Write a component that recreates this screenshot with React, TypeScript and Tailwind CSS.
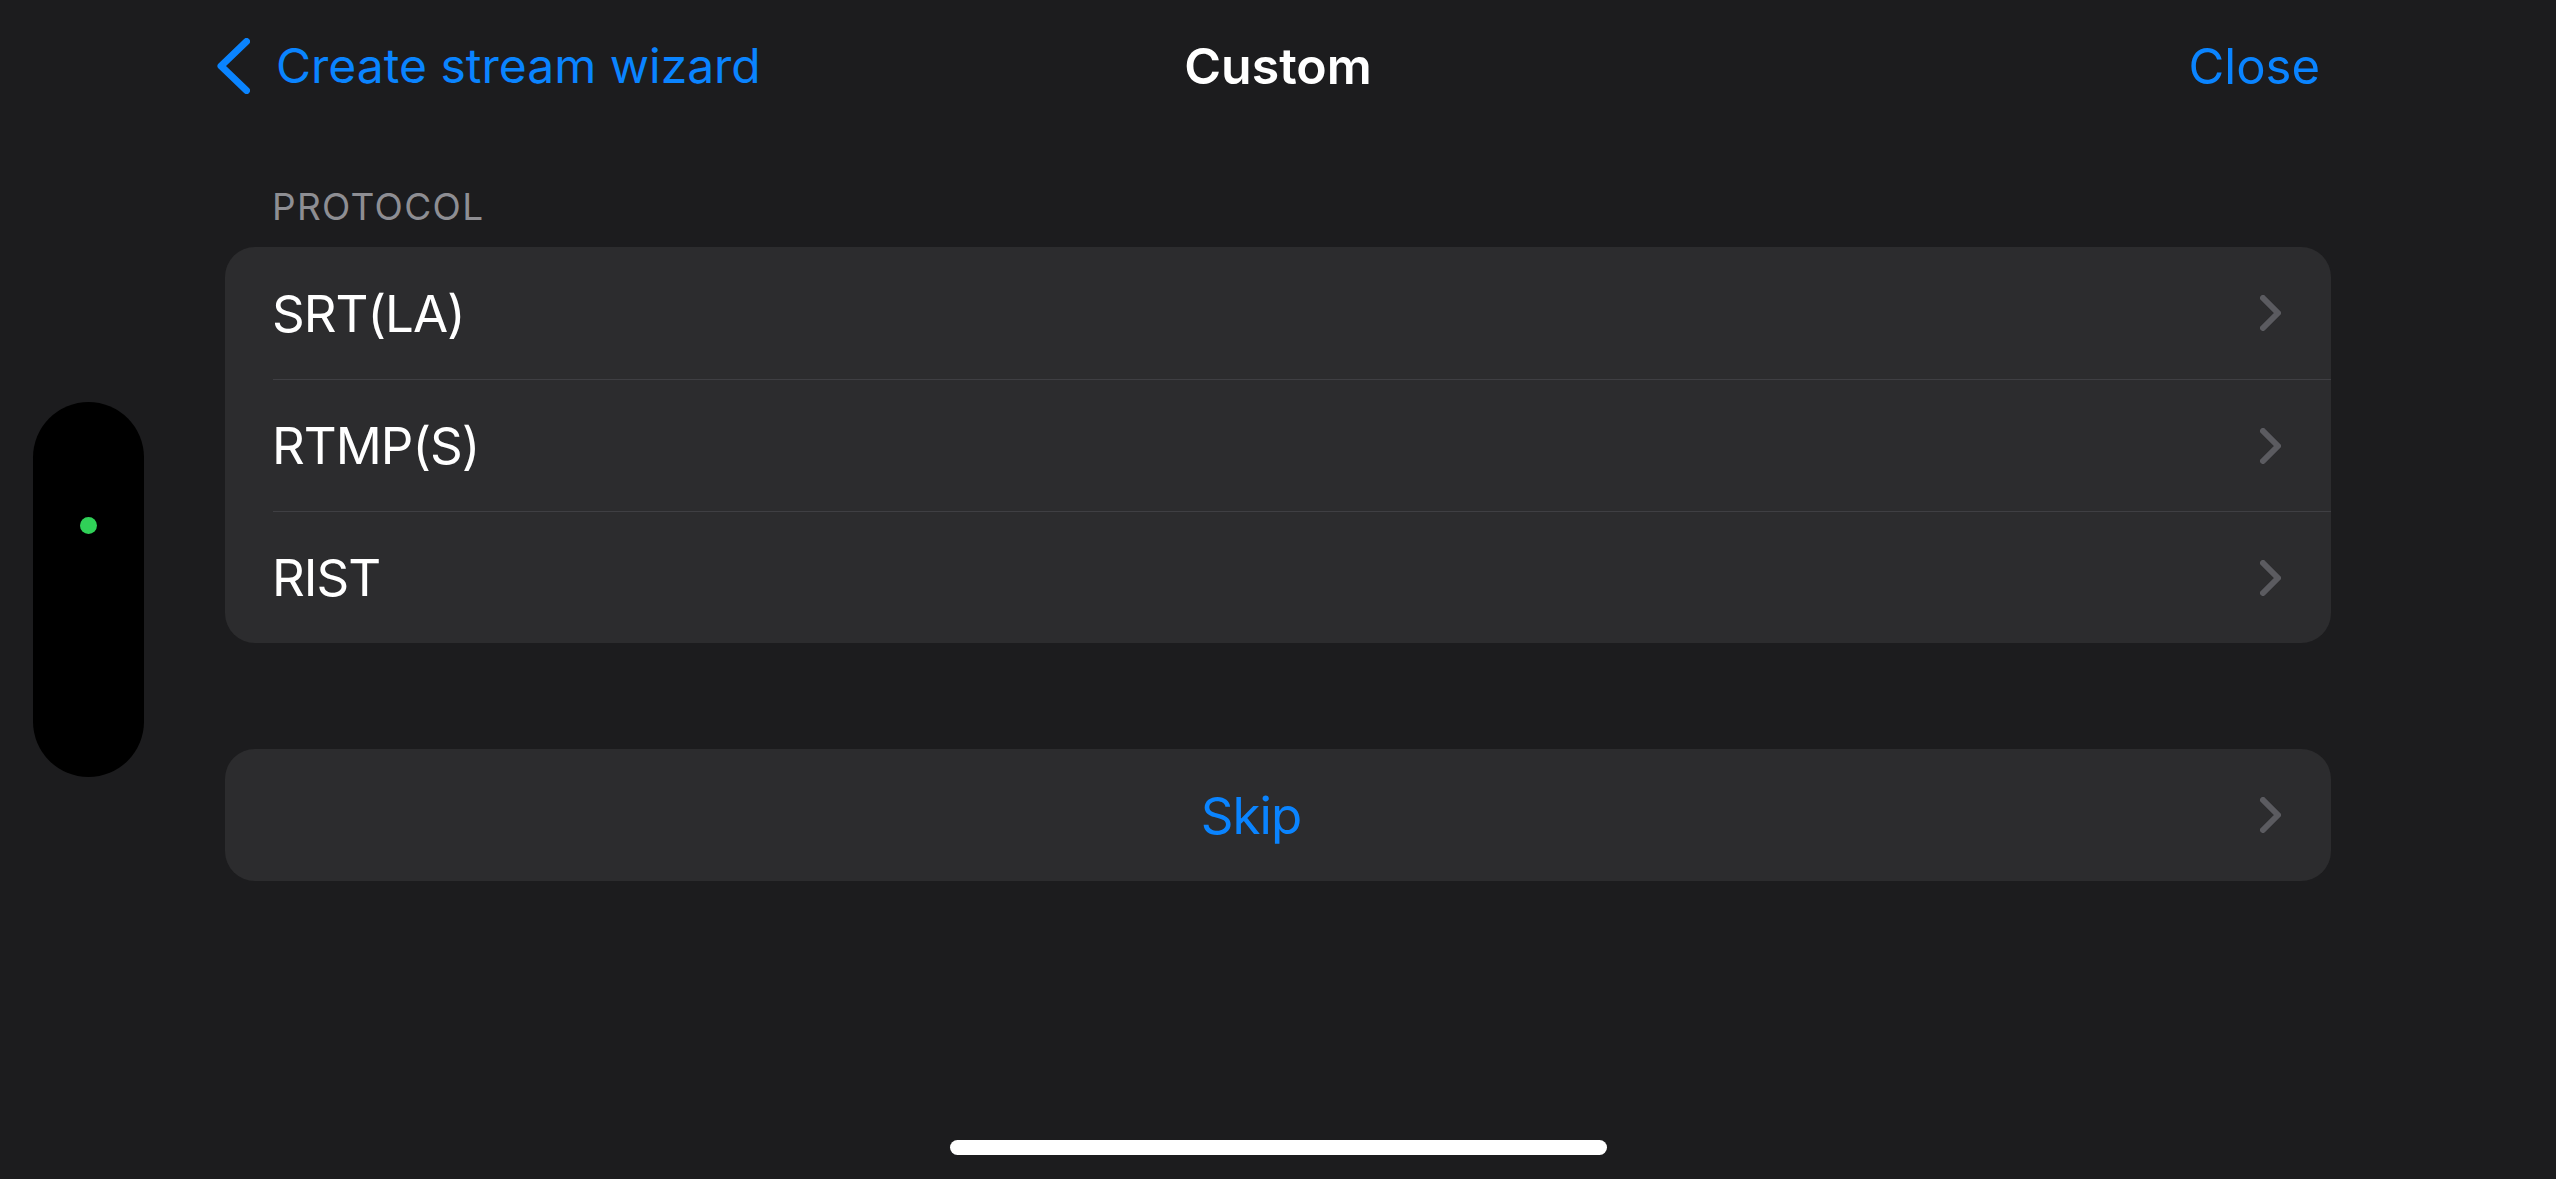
import React from "react";

function RowChevron() {
  return (
    <svg width="21" height="36" viewBox="0 0 21 36" fill="none" className="shrink-0">
      <polyline points="3,3 18,18 3,33" stroke="#5b5b60" strokeWidth="6" strokeLinecap="round" strokeLinejoin="round" />
    </svg>
  );
}

function BackChevron() {
  return (
    <svg width="33" height="56" viewBox="0 0 33 56" fill="none" className="shrink-0">
      <polyline points="29.5,3.5 4,28 29.5,52.5" stroke="#0a84ff" strokeWidth="7" strokeLinecap="round" strokeLinejoin="round" />
    </svg>
  );
}

const protocols = ["SRT(LA)", "RTMP(S)", "RIST"];

export default function App() {
  return (
    <div
      className="relative w-[2556px] h-[1179px] overflow-hidden bg-[#1c1c1e] text-white"
      style={{ fontFamily: "Inter, 'Noto Sans', sans-serif" }}
    >
      {/* Navigation bar */}
      <div className="grid grid-cols-[1fr_auto_1fr] items-center h-[132px]">
        <div className="flex items-center gap-[26px] pl-[217px]">
          <BackChevron />
          <span className="text-[48px] leading-none text-[#0a84ff]">Create stream wizard</span>
        </div>
        <div className="text-[50px] leading-none font-semibold text-white">Custom</div>
        <div className="flex justify-end pr-[236px]">
          <span className="text-[49px] leading-none text-[#0a84ff]">Close</span>
        </div>
      </div>

      {/* Section header */}
      <div className="px-[272px] pt-[56px] text-[37px] leading-none text-[#8e8e93] tracking-[1.3px]">PROTOCOL</div>

      {/* Protocol list */}
      <div className="mx-[225px] mt-[22px] rounded-[30px] bg-[#2c2c2e] overflow-hidden">
        {protocols.map((p, i) => (
          <div key={p} className="relative">
            {i > 0 && <div className="ml-[48px] h-px bg-[#3f3f43]" />}
            <div className={`flex items-center justify-between pl-[47px] pr-[50px] ${i > 0 ? "h-[131px]" : "h-[132px]"}`}>
              <span className="text-[51px] leading-none text-white tracking-[-1px]">{p}</span>
              <RowChevron />
            </div>
          </div>
        ))}
      </div>

      {/* Skip */}
      <div className="mx-[225px] mt-[106px] h-[132px] rounded-[30px] bg-[#2c2c2e] flex items-center pl-[50px] pr-[50px]">
        <div className="flex-1 text-center pr-[33px]">
          <span className="text-[51px] leading-none text-[#0a84ff] tracking-[-1px]">Skip</span>
        </div>
        <RowChevron />
      </div>

      {/* Side pill overlay */}
      <div className="absolute left-[33px] top-[402px] w-[111px] h-[375px] rounded-full bg-black">
        <div className="absolute left-[47px] top-[115px] w-[17px] h-[17px] rounded-full bg-[#30d158]" />
      </div>

      {/* Home indicator */}
      <div className="absolute left-[950px] top-[1140px] w-[657px] h-[15px] rounded-full bg-white" />
    </div>
  );
}
